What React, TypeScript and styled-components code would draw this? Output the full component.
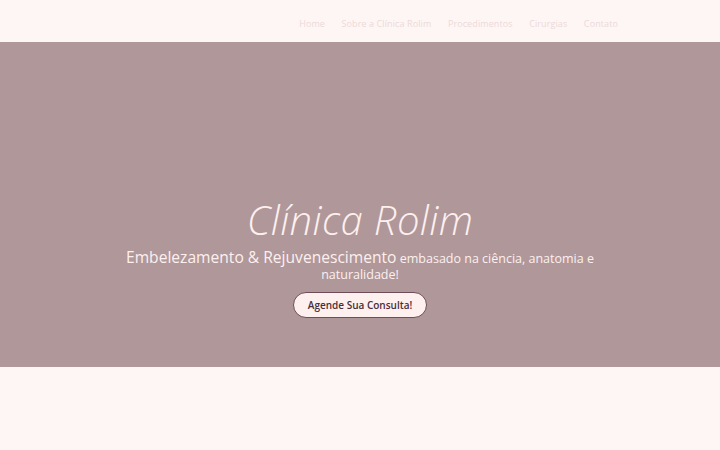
import React from "react";
import styled, { createGlobalStyle } from "styled-components";

const Global = createGlobalStyle`
  html, body { margin: 0; padding: 0; background: #fdf6f4; }
  body { font-family: "Open Sans", "Noto Sans", sans-serif; }
`;

const Page = styled.div`
  width: 720px;
  min-height: 450px;
  background: #fdf6f4;
  display: flex;
  flex-direction: column;
`;

const Header = styled.header`
  height: 42px;
  background: #fdf6f4;
  display: flex;
  align-items: center;
  justify-content: flex-end;
  padding-right: 102px;
  box-sizing: border-box;
`;

const Nav = styled.nav`
  display: flex;
  gap: 16.5px;
  padding-top: 4px;
`;

const NavLink = styled.a`
  font-size: 9px;
  color: #edd9d9;
  text-decoration: none;
  letter-spacing: 0.1px;
`;

const Hero = styled.section`
  height: 325px;
  background: #b0979a;
  display: flex;
  flex-direction: column;
  align-items: center;
  justify-content: flex-start;
  padding-top: 156px;
  box-sizing: border-box;
  color: #fdf0ee;
  text-align: center;
`;

const Title = styled.h1`
  margin: 0;
  font-size: 40px;
  font-weight: 300;
  font-style: italic;
  letter-spacing: 0.4px;
  line-height: 44px;
`;

const Subtitle = styled.p`
  margin: 7px 0 0;
  width: 490px;
  font-size: 12.5px;
  line-height: 16px;
  font-weight: 400;
`;

const Big = styled.span`
  font-size: 15.6px;
`;

const Cta = styled.button`
  margin-top: 9px;
  width: 134px;
  height: 26px;
  border-radius: 13px;
  border: 1px solid #6e4d58;
  background: #fdf0ee;
  color: #4a2e38;
  font-family: "Open Sans", sans-serif;
  font-weight: 600;
  font-size: 10px;
  cursor: pointer;
`;

const Below = styled.section`
  flex: 1;
  background: #fdf6f4;
`;

export default function App() {
  const links = ["Home", "Sobre a Clínica Rolim", "Procedimentos", "Cirurgias", "Contato"];
  return (
    <Page>
      <Global />
      <Header>
        <Nav>
          {links.map((l) => (
            <NavLink key={l} href="#">{l}</NavLink>
          ))}
        </Nav>
      </Header>
      <Hero>
        <Title>Clínica Rolim</Title>
        <Subtitle>
          <Big>Embelezamento &amp; Rejuvenescimento</Big> embasado na ciência, anatomia e naturalidade!
        </Subtitle>
        <Cta>Agende Sua Consulta!</Cta>
      </Hero>
      <Below />
    </Page>
  );
}
